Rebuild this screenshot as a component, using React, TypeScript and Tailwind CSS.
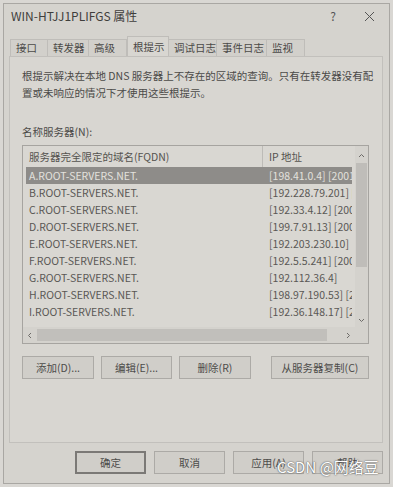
import React from "react";

const font = "font-['Noto_Sans_CJK_SC','Noto_Sans',sans-serif]";

const tabs = ["接口", "转发器", "高级", "根提示", "调试日志", "事件日志", "监视"];
const tabWidths = [38, 41, 38, 42, 48, 50, 38];

const servers = [
  ["A.ROOT-SERVERS.NET.", "[198.41.0.4] [2001:503:ba3e::2:30]"],
  ["B.ROOT-SERVERS.NET.", "[192.228.79.201] [2001:500:84::b]"],
  ["C.ROOT-SERVERS.NET.", "[192.33.4.12] [2001:500:2::c]"],
  ["D.ROOT-SERVERS.NET.", "[199.7.91.13] [2001:500:2d::d]"],
  ["E.ROOT-SERVERS.NET.", "[192.203.230.10]"],
  ["F.ROOT-SERVERS.NET.", "[192.5.5.241] [2001:500:2f::f]"],
  ["G.ROOT-SERVERS.NET.", "[192.112.36.4]"],
  ["H.ROOT-SERVERS.NET.", "[198.97.190.53] [2001:500:1::53]"],
  ["I.ROOT-SERVERS.NET.", "[192.36.148.17] [2001:7fe::53]"],
];

function Button(props: { label: string; width: string; isDefault?: boolean }) {
  return (
    <div
      className={`flex h-[23px] items-center justify-center bg-[#d0cec9] text-[10.5px] text-[#4d4c4a] ${props.width} ${
        props.isDefault ? "border-2 border-[#7b7976]" : "border border-[#acaaa6]"
      }`}
    >
      {props.label}
    </div>
  );
}

export default function App() {
  return (
    <div className={`relative h-[487px] w-[393px] bg-[#d9d7d3] p-[3px] ${font}`}>
      <div className="flex h-[481px] flex-col border border-[#a9a7a3] bg-[#d5d3ce]">
        {/* title bar */}
        <div className="flex h-[24px] items-center pl-[7px] pr-[14px] text-[12px] text-[#3f3e3c]">
          <span className="flex-1">WIN-HTJJ1PLIFGS 属性</span>
          <span className="mr-[28px] text-[12px] text-[#555]">?</span>
          <svg width="11" height="11" viewBox="0 0 11 11" className="text-[#555]">
            <path d="M1 1L10 10M10 1L1 10" stroke="currentColor" strokeWidth="1" />
          </svg>
        </div>

        {/* tabs */}
        <div className="mt-[8px] flex h-[20px] items-end pl-[6px]">
          {tabs.map((t, i) => (
            <div
              key={t}
              style={{ width: tabWidths[i] }}
              className={`flex items-center border-[#bfbdb9] text-[10.5px] text-[#4b4a48] ${
                i === 3
                  ? "h-[20px] border-x border-t bg-[#d8d6d1] pl-[5px]"
                  : "h-[17px] border-r border-t bg-[#d2d0cb] pl-[5px]"
              } ${i === 0 ? "border-l" : ""}`}
            >
              {t}
            </div>
          ))}
        </div>

        {/* panel */}
        <div className="ml-[5px] mr-[6px] flex h-[387px] flex-col border border-[#c2c0bc] bg-[#d8d6d1] pl-[12px]">
          <p className="mt-[10px] w-[354px] text-[10.5px] leading-[17px] text-[#4b4a48]">
            根提示解决在本地 DNS 服务器上不存在的区域的查询。只有在转发器没有配置或未响应的情况下才使用这些根提示。
          </p>
          <div className="mt-[24px] text-[10.5px] leading-[14px] text-[#4b4a48]">名称服务器(N):</div>

          {/* list */}
          <div className="mt-[6px] flex h-[199px] w-[347px] flex-col border border-[#a6a4a0] bg-[#d9d7d2]">
            <div className="flex flex-1">
              <div className="flex flex-1 flex-col overflow-hidden">
                <div className="flex h-[21px] shrink-0 items-center text-[10.5px] text-[#55534f]">
                  <div className="w-[239px] pl-[6px]">服务器完全限定的域名(FQDN)</div>
                  <div className="h-full w-px bg-[#bdbbb7]" />
                  <div className="pl-[6px]">IP 地址</div>
                </div>
                {servers.map(([name, ip], i) => (
                  <div
                    key={name}
                    className={`mx-[3px] flex h-[17px] shrink-0 items-center whitespace-nowrap text-[10.5px] ${
                      i === 0 ? "bg-[#8e8c89] text-[#e3e1dd]" : "text-[#5a5855]"
                    }`}
                  >
                    <div className="w-[240px] shrink-0 pl-[3px]">{name}</div>
                    <div className="overflow-hidden pl-[3px]">{ip}</div>
                  </div>
                ))}
              </div>
              {/* vertical scrollbar */}
              <div className="flex w-[13px] flex-col items-center bg-[#d4d2cd]">
                <svg width="9" height="17" viewBox="0 0 9 17" className="shrink-0 text-[#6d6b68]">
                  <path d="M2 11L4.5 8.5L7 11" fill="none" stroke="currentColor" strokeWidth="1" />
                </svg>
                <div className="h-[104px] w-[11px] bg-[#bfbdb9]" />
                <div className="flex-1" />
                <svg width="9" height="12" viewBox="0 0 9 12" className="shrink-0 text-[#6d6b68]">
                  <path d="M2 4L4.5 6.5L7 4" fill="none" stroke="currentColor" strokeWidth="1" />
                </svg>
              </div>
            </div>
            {/* horizontal scrollbar */}
            <div className="flex h-[16px] shrink-0 items-center bg-[#d4d2cd]">
              <svg width="14" height="14" viewBox="0 0 14 14" className="text-[#6d6b68]">
                <path d="M8 5L5.5 7.5L8 10" fill="none" stroke="currentColor" strokeWidth="1" />
              </svg>
              <div className="h-[12px] w-[290px] bg-[#c1bfbb]" />
              <div className="flex flex-1 justify-center">
                <svg width="14" height="14" viewBox="0 0 14 14" className="text-[#6d6b68]">
                  <path d="M6 5L8.5 7.5L6 10" fill="none" stroke="currentColor" strokeWidth="1" />
                </svg>
              </div>
            </div>
          </div>

          {/* list buttons */}
          <div className="mt-[12px] flex w-[347px] items-center">
            <Button label="添加(D)..." width="w-[72px]" />
            <div className="w-[7px]" />
            <Button label="编辑(E)..." width="w-[71px]" />
            <div className="w-[7px]" />
            <Button label="删除(R)" width="w-[72px]" />
            <div className="flex-1" />
            <Button label="从服务器复制(C)" width="w-[98px]" />
          </div>
        </div>

        {/* dialog buttons */}
        <div className="mt-[8px] flex items-center gap-[8px] pl-[71px]">
          <Button label="确定" width="w-[71px]" isDefault />
          <Button label="取消" width="w-[71px]" />
          <Button label="应用(A)" width="w-[71px]" />
          <Button label="帮助" width="w-[71px]" />
        </div>
      </div>

      {/* watermark */}
      <div className="absolute left-[277px] top-[457px] text-[15px] leading-[20px] text-white [text-shadow:0_0_1px_#555,0_0_2px_#666]">
        CSDN @网络豆
      </div>
    </div>
  );
}
